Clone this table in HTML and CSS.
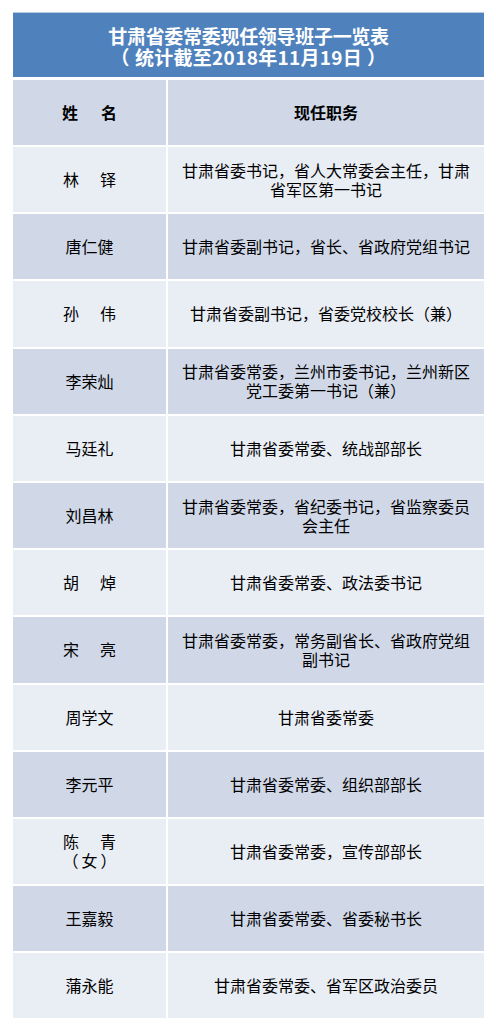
FILE: index.html
```html
<!DOCTYPE html>
<html lang="zh-CN">
<head>
<meta charset="utf-8">
<title>甘肃省委常委现任领导班子一览表</title>
<link rel="stylesheet" href="styles.css">
</head>
<body>
<div class="sheet">
  <div class="title"><span class="t1">甘肃省委常委现任领导班子一览表</span><span class="t2"><span class="po">（</span>统计截至2018年11月19日<span class="pc">）</span></span></div>
  <div class="grid">
    <div class="cell head"><span class="txt">姓<span class="sp wide"></span>名</span></div>
    <div class="cell head"><span class="txt">现任职务</span></div>

    <div class="cell light"><span class="txt">林<span class="sp"></span>铎</span></div>
    <div class="cell light"><span class="txt">甘肃省委书记，省人大常委会主任，甘肃省军区第一书记</span></div>

    <div class="cell dark"><span class="txt">唐仁健</span></div>
    <div class="cell dark"><span class="txt">甘肃省委副书记，省长、省政府党组书记</span></div>

    <div class="cell light"><span class="txt">孙<span class="sp"></span>伟</span></div>
    <div class="cell light"><span class="txt">甘肃省委副书记，省委党校校长（兼）</span></div>

    <div class="cell dark"><span class="txt">李荣灿</span></div>
    <div class="cell dark"><span class="txt">甘肃省委常委，兰州市委书记，兰州新区党工委第一书记（兼）</span></div>

    <div class="cell light"><span class="txt">马廷礼</span></div>
    <div class="cell light"><span class="txt">甘肃省委常委、统战部部长</span></div>

    <div class="cell dark"><span class="txt">刘昌林</span></div>
    <div class="cell dark"><span class="txt">甘肃省委常委，省纪委书记，省监察委员会主任</span></div>

    <div class="cell light"><span class="txt">胡<span class="sp"></span>焯</span></div>
    <div class="cell light"><span class="txt">甘肃省委常委、政法委书记</span></div>

    <div class="cell dark"><span class="txt">宋<span class="sp"></span>亮</span></div>
    <div class="cell dark"><span class="txt">甘肃省委常委，常务副省长、省政府党组副书记</span></div>

    <div class="cell light"><span class="txt">周学文</span></div>
    <div class="cell light"><span class="txt">甘肃省委常委</span></div>

    <div class="cell dark"><span class="txt">李元平</span></div>
    <div class="cell dark"><span class="txt">甘肃省委常委、组织部部长</span></div>

    <div class="cell light"><span class="txt">陈<span class="sp"></span>青<br><span class="po sm">（</span>女<span class="pc sm">）</span></span></div>
    <div class="cell light"><span class="txt">甘肃省委常委，宣传部部长</span></div>

    <div class="cell dark"><span class="txt">王嘉毅</span></div>
    <div class="cell dark"><span class="txt">甘肃省委常委、省委秘书长</span></div>

    <div class="cell light"><span class="txt">蒲永能</span></div>
    <div class="cell light"><span class="txt">甘肃省委常委、省军区政治委员</span></div>
  </div>
</div>
</body>
</html>
```
FILE: styles.css
```css
html, body {
  margin: 0;
  padding: 0;
  background: #ffffff;
}

body {
  font-family: "Noto Sans CJK SC", "Noto Sans", "Liberation Sans", sans-serif;
  color: #000000;
}

.sheet {
  width: 471px;
  margin: 12px 0 0 13px;
}

.title {
  background: #4f81bd;
  border-top: 1px solid #b9cbe3;
  color: #ffffff;
  font-weight: bold;
  font-size: 19px;
  line-height: 21px;
  height: 65px;
  box-sizing: border-box;
  padding-top: 12px;
  text-align: center;
}

.t1, .t2 {
  display: block;
}

.t1 {
  letter-spacing: -0.3px;
}

.t2 {
  letter-spacing: 0.3px;
}

.po {
  margin-right: 5px;
}

.pc {
  margin-left: 5px;
}

.po.sm {
  margin-right: 3px;
}

.pc.sm {
  margin-left: 3px;
}

.grid {
  display: grid;
  grid-template-columns: 153px 316px;
  grid-template-rows: 65px repeat(13, 65.2px);
  gap: 2px;
  margin-top: 3px;
  background: #ffffff;
}

.cell {
  display: flex;
  align-items: center;
  justify-content: center;
  text-align: center;
  font-size: 16px;
  line-height: 19px;
  padding: 0 12px;
}

.txt {
  display: block;
}

.head {
  background: #d0d8e8;
  font-weight: bold;
}

.light {
  background: #e9edf4;
}

.dark {
  background: #d0d8e8;
}

.sp {
  display: inline-block;
  width: 21px;
}

.sp.wide {
  width: 23px;
}
```
